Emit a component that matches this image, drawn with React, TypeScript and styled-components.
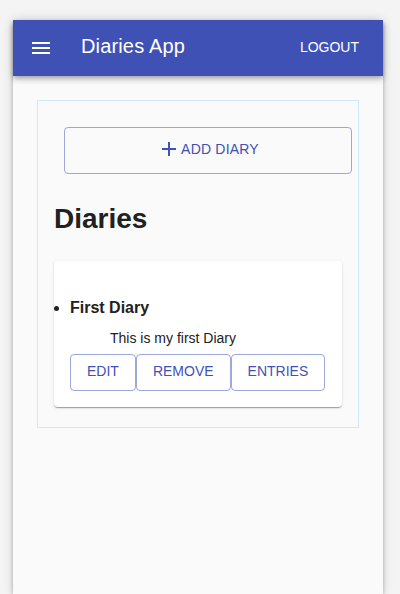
import React from "react";
import styled, { createGlobalStyle } from "styled-components";

const GlobalStyle = createGlobalStyle`
  body {
    margin: 0;
    background: #f4f4f4;
    font-family: "Liberation Sans", Arial, sans-serif;
    color: rgba(0, 0, 0, 0.87);
  }
`;

const diaries = [{ id: 1, title: "First Diary", subtitle: "This is my first Diary" }];

function MenuIcon() {
  return (
    <svg width="24" height="24" viewBox="0 0 24 24" fill="currentColor">
      <path d="M3 18h18v-2H3v2zm0-5h18v-2H3v2zm0-7v2h18V6H3z" />
    </svg>
  );
}

function AddIcon() {
  return (
    <svg width="24" height="24" viewBox="0 0 24 24" fill="currentColor">
      <path d="M19 13h-6v6h-2v-6H5v-2h6V5h2v6h6v2z" />
    </svg>
  );
}

export default function App() {
  return (
    <>
      <GlobalStyle />
      <Page>
        <Panel>
          <AppBar>
            <MenuButton aria-label="menu">
              <MenuIcon />
            </MenuButton>
            <AppTitle>Diaries App</AppTitle>
            <LogoutButton>Logout</LogoutButton>
          </AppBar>
          <Content>
            <DiaryBox>
              <AddDiaryButton>
                <AddIcon />
                Add Diary
              </AddDiaryButton>
              <Heading>Diaries</Heading>
              <Card>
                <DiaryList>
                  {diaries.map((d) => (
                    <DiaryItem key={d.id}>
                      <DiaryTitle>{d.title}</DiaryTitle>
                      <DiarySubtitle>{d.subtitle}</DiarySubtitle>
                      <ActionRow>
                        <OutlinedButton>Edit</OutlinedButton>
                        <OutlinedButton>Remove</OutlinedButton>
                        <OutlinedButton>Entries</OutlinedButton>
                      </ActionRow>
                    </DiaryItem>
                  ))}
                </DiaryList>
              </Card>
            </DiaryBox>
          </Content>
        </Panel>
      </Page>
    </>
  );
}

const Page = styled.div`
  padding: 20px 0 0 13px;
  min-height: 594px;
  box-sizing: border-box;
`;

const Panel = styled.div`
  width: 370px;
  min-height: 574px;
  background: #fafafa;
  box-shadow: 0 2px 4px -1px rgba(0, 0, 0, 0.2), 0 4px 5px 0 rgba(0, 0, 0, 0.14),
    0 1px 10px 0 rgba(0, 0, 0, 0.12);
`;

const AppBar = styled.header`
  height: 56px;
  display: flex;
  align-items: center;
  padding: 0 16px;
  background: #3f51b5;
  color: #fff;
  box-shadow: 0 2px 4px -1px rgba(0, 0, 0, 0.2), 0 4px 5px 0 rgba(0, 0, 0, 0.14),
    0 1px 10px 0 rgba(0, 0, 0, 0.12);
  position: relative;
  z-index: 1;
`;

const MenuButton = styled.button`
  display: flex;
  align-items: center;
  justify-content: center;
  margin: 0 16px 0 -12px;
  padding: 12px;
  border: 0;
  background: none;
  color: #fff;
`;

const AppTitle = styled.h1`
  flex: 1;
  margin: 0 0 4px;
  font-size: 20px;
  font-weight: 400;
  line-height: 32px;
  letter-spacing: 0.15px;
`;

const LogoutButton = styled.button`
  margin-bottom: 3px;
  border: 0;
  background: none;
  color: #fff;
  font-family: inherit;
  font-size: 14px;
  text-transform: uppercase;
  padding: 6px 8px;
  line-height: 24px;
`;

const Content = styled.main`
  padding: 24px;
`;

const DiaryBox = styled.section`
  border: 1px solid #cfe8fc;
  padding: 26px 16px 20px;
  display: flex;
  flex-direction: column;
`;

const AddDiaryButton = styled.button`
  height: 47px;
  margin: 0 -10px 0 10px;
  padding: 0 0 3px;
  display: flex;
  align-items: center;
  justify-content: center;
  border: 1px solid rgba(63, 81, 181, 0.5);
  border-radius: 4px;
  background: transparent;
  color: #3f51b5;
  font-family: inherit;
  font-size: 14px;
  text-transform: uppercase;
  letter-spacing: 0.2px;
`;

const Heading = styled.h2`
  margin: 29px 0 26px;
  font-size: 28px;
  font-weight: 700;
  line-height: 32px;
  color: #212121;
`;

const Card = styled.div`
  background: #fff;
  border-radius: 4px;
  padding: 37px 16px 16px 0;
  box-shadow: 0 2px 1px -1px rgba(0, 0, 0, 0.2), 0 1px 1px 0 rgba(0, 0, 0, 0.14),
    0 1px 3px 0 rgba(0, 0, 0, 0.12);
`;

const DiaryList = styled.ul`
  margin: 0;
  padding-left: 16px;
  list-style: disc;
`;

const DiaryItem = styled.li`
  font-size: 16px;
  color: #212121;
`;

const DiaryTitle = styled.div`
  font-weight: 700;
  line-height: 20px;
`;

const DiarySubtitle = styled.p`
  margin: 10px 0 6px;
  padding-left: 40px;
  font-size: 14px;
  line-height: 20px;
`;

const ActionRow = styled.div`
  display: flex;
`;

const OutlinedButton = styled.button`
  height: 37px;
  padding: 0 16px 3px;
  border: 1px solid rgba(63, 81, 181, 0.5);
  border-radius: 4px;
  background: transparent;
  color: #3f51b5;
  font-family: inherit;
  font-size: 14px;
  text-transform: uppercase;
`;
